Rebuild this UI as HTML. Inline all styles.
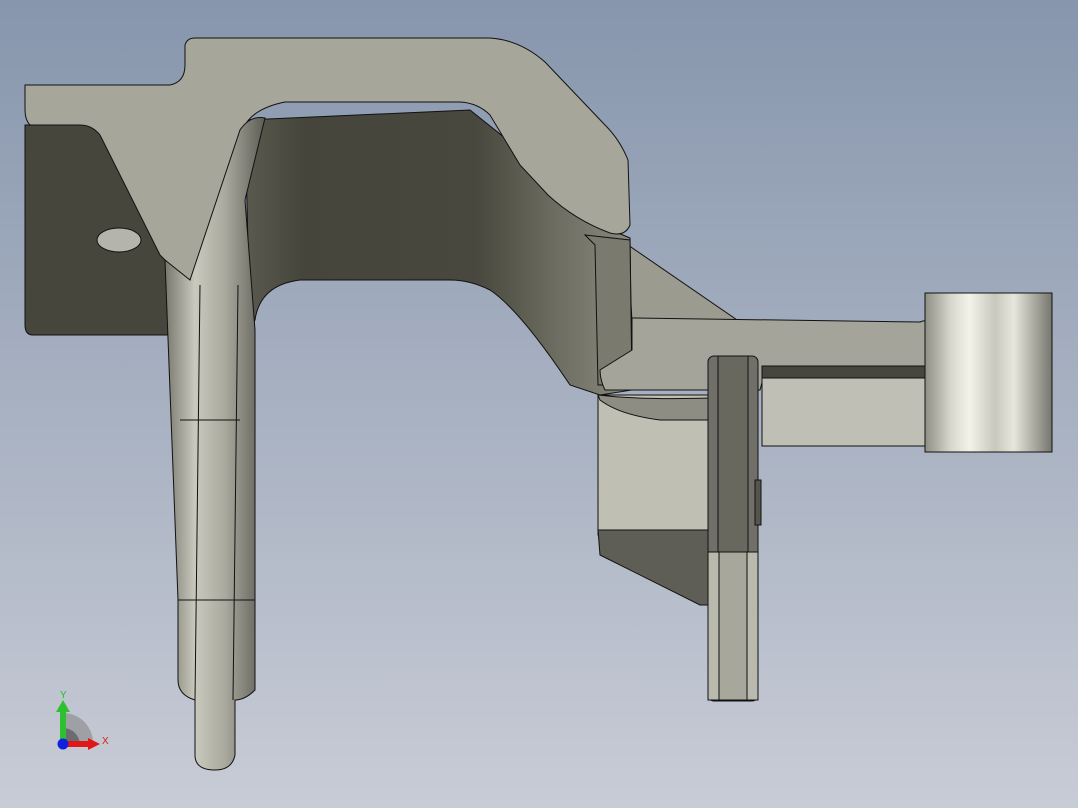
<!DOCTYPE html><html><head><style>html,body{margin:0;padding:0;width:1078px;height:808px;overflow:hidden}</style></head><body>
<svg width="1078" height="808" viewBox="0 0 1078 808" xmlns="http://www.w3.org/2000/svg">
<defs>
<linearGradient id="bg" x1="0" y1="0" x2="0" y2="1"><stop offset="0" stop-color="#8796ad"/><stop offset="1" stop-color="#c8ccd6"/></linearGradient>
<linearGradient id="cyl" x1="0" y1="0" x2="1" y2="0"><stop offset="0" stop-color="#8e8e84"/><stop offset="0.2" stop-color="#d6d6cc"/><stop offset="0.35" stop-color="#f3f3ea"/><stop offset="0.55" stop-color="#c8c8bd"/><stop offset="0.7" stop-color="#e6e6dc"/><stop offset="1" stop-color="#76766e"/></linearGradient>
<linearGradient id="leg" x1="0" y1="0" x2="1" y2="0"><stop offset="0" stop-color="#77776d"/><stop offset="0.3" stop-color="#c9c9be"/><stop offset="0.6" stop-color="#a9a99e"/><stop offset="1" stop-color="#5d5d55"/></linearGradient>
<linearGradient id="arch" x1="0" y1="0" x2="1" y2="0"><stop offset="0" stop-color="#5a5a4f"/><stop offset="0.15" stop-color="#45453b"/><stop offset="0.6" stop-color="#48483e"/><stop offset="0.8" stop-color="#6c6c60"/><stop offset="1" stop-color="#8a8a7e"/></linearGradient>
</defs>
<rect width="1078" height="808" fill="url(#bg)"/>
<g stroke="#111" stroke-width="1">
<path d="M25 125 L165 125 L180 270 L175 335 L33 335 Q25 335 25 325 Z" fill="#46463c"/>
<ellipse cx="119" cy="240" rx="22" ry="12" fill="#b4b4aa"/>
<!-- diagonal strip -->
<path d="M628 245 L740 322 L632 322 Z" fill="#9c9b90"/>
<!-- arch inner dark, extended right -->
<path d="M245 120 L470 110 L520 150 L575 215 L630 238 L632 390 L600 395 L570 385 Q520 310 490 290 Q470 280 450 280 L300 280 Q260 285 255 320 L250 330 Z" fill="url(#arch)"/>
<path d="M585 235 L630 240 L632 385 L598 385 L595 245 Z" fill="#7a7a6e"/>
<!-- top plate -->
<path d="M25 85 L170 85 Q185 82 185 65 L185 45 Q187 38 195 38 L490 38 Q520 40 545 62 L605 125 Q620 140 628 160 L630 225 Q625 237 610 233 Q575 220 548 195 L520 165 L490 115 Q478 103 460 102 L285 102 Q255 108 245 125 L235 150 L215 290 L185 280 L160 255 L100 135 Q92 125 80 125 L30 125 Q25 120 25 110 Z" fill="#a7a69b"/>
<!-- left leg -->
<path d="M165 260 L190 280 L240 130 Q250 115 265 118 L245 200 L255 330 L255 690 Q245 700 235 700 L235 755 Q232 770 215 770 Q195 770 195 755 L195 700 Q178 695 178 680 L178 600 Z" fill="url(#leg)"/>
<line x1="200" y1="285" x2="195" y2="700"/><line x1="238" y1="285" x2="233" y2="700"/>
<line x1="180" y1="420" x2="240" y2="420"/><line x1="178" y1="600" x2="255" y2="600"/>
<!-- ledge -->
<path d="M632 318 L920 322 Q935 315 945 345 L945 372 L765 372 L760 390 L605 390 Q600 380 600 370 L632 350 Z" fill="#a5a49a"/>
<!-- box -->
<path d="M598 395 L710 395 L710 535 L598 535 Z" fill="#bfbfb4"/>
<path d="M598 395 Q640 400 710 398 L710 420 L660 420 Q620 415 600 400 Z" fill="#8e8d83"/>
<path d="M598 530 L710 530 L712 605 L700 605 L600 555 Z" fill="#5e5e56"/>
<!-- arm -->
<rect x="762" y="376" width="170" height="70" fill="#bfbfb5"/>
<rect x="762" y="366" width="170" height="12" fill="#46463c"/>
<!-- vertical plate -->
<rect x="708" y="356" width="50" height="345" rx="6" fill="#717068"/>
<rect x="718" y="356" width="30" height="345" fill="#68685f"/>
<path d="M708 552 L758 552 L758 700 L708 700 Z" fill="#b9b9ae"/>
<rect x="719" y="552" width="28" height="148" fill="#a7a79c"/>
<rect x="755" y="480" width="6" height="45" fill="#55554c"/>
<rect x="925" y="293" width="127" height="159" fill="url(#cyl)"/>
</g>
<g>
<path d="M63 745 L63 713 A30 30 0 0 1 93 743 Z" fill="#9ea0a6"/>
<path d="M63 745 L63 728 A17 17 0 0 1 80 745 Z" fill="#6a6c72"/>
<rect x="60" y="710" width="6" height="33" fill="#2fc02f"/><polygon points="56,712 63,700 70,712" fill="#2fc02f"/>
<rect x="64" y="741" width="26" height="6" fill="#e01818"/><polygon points="88,738 100,744 88,750" fill="#e01818"/>
<circle cx="63" cy="744" r="5.5" fill="#1020e0"/>
<text x="60" y="698" font-family="Liberation Sans, sans-serif" font-size="10" fill="#20c020">Y</text>
<text x="102" y="744" font-family="Liberation Sans, sans-serif" font-size="10" fill="#e01818">X</text>
</g>
</svg>
</body></html>
